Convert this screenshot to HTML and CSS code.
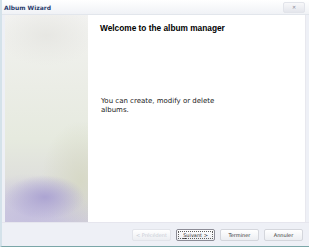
FILE: index.html
```html
<!DOCTYPE html>
<html lang="en">
<head>
  <meta charset="UTF-8" />
  <title>Album Wizard</title>
  <link rel="stylesheet" href="styles.css">
</head>
<body>
  <div class="fenetre">
    <div class="barre-titre">
      <span class="titre">Album Wizard</span>
      <span class="fermer">&#10005;</span>
    </div>

    <div class="corps">
      <div class="image-cote"></div>
      <div class="contenu">
        <h1>Welcome to the album manager</h1>
        <p>You can create, modify or delete albums.</p>
      </div>
    </div>

    <div class="boutons">
      <button type="button" disabled>&lt; Précédent</button>
      <button type="button" class="actif"><u>S</u>uivant &gt;</button>
      <button type="button">Terminer</button>
      <button type="button">Annuler</button>
    </div>
  </div>
</body>
</html>
```

FILE: styles.css
```css
html, body {
  margin: 0;
  padding: 0;
}

body {
  font-family: 'DejaVu Sans', Verdana, sans-serif;
  background: #ffffff;
  width: 309px;
  height: 249px;
  overflow: hidden;
  -webkit-font-smoothing: antialiased;
}

.fenetre {
  display: flex;
  flex-direction: column;
  width: 309px;
  height: 247px;
  background: #eef0f6;
  border-bottom: 1px solid #7aa6a8;
  border-left: 2px solid #d4e2ea;
  box-sizing: border-box;
}

.barre-titre {
  height: 14px;
  display: flex;
  align-items: center;
  justify-content: space-between;
  padding: 0 4px 0 2px;
  background: linear-gradient(#ffffff, #f0f2f6);
  border-bottom: 1px solid #e2e6ec;
}

.titre {
  font-size: 6px;
  font-weight: bold;
  color: #2a3c6c;
}

.fermer {
  width: 20px;
  height: 9px;
  font-size: 5px;
  line-height: 9px;
  text-align: center;
  color: #8a8a96;
  background: linear-gradient(#f8f8fa, #e4e6ec);
  border: 1px solid #e2e4ea;
  border-radius: 2px;
}

.corps {
  flex: 1;
  display: flex;
  padding-left: 3px;
  padding-right: 3px;
}

.image-cote {
  width: 83px;
  background:
    radial-gradient(ellipse 40px 22px at 48% 88%, rgba(172,164,210,1), rgba(172,164,210,0) 100%),
    radial-gradient(ellipse 60px 40px at 30% 96%, rgba(196,190,222,0.9), rgba(196,190,222,0) 100%),
    radial-gradient(ellipse 40px 60px at 92% 80%, rgba(214,216,196,0.9), rgba(214,216,196,0) 100%),
    radial-gradient(ellipse 50px 30px at 50% 10%, rgba(230,230,226,0.9), rgba(230,230,226,0) 100%),
    linear-gradient(#f2f2f0 0%, #ebede6 35%, #e6eadf 60%, #dfe0dc 78%, #cdcadf 100%);
}

.contenu {
  flex: 1;
  background: #ffffff;
  padding: 8px 12px;
  border-right: 1px solid #e8e8ee;
}

.contenu h1 {
  font-family: 'Liberation Sans', Arial, sans-serif;
  font-size: 8.3px;
  font-weight: bold;
  margin: 0;
  color: #000000;
}

.contenu p {
  font-size: 7px;
  line-height: 9px;
  margin: 64px 0 0 1px;
  width: 125px;
  color: #222222;
}

.boutons {
  height: 23px;
  display: flex;
  align-items: center;
  justify-content: flex-end;
  gap: 5px;
  padding-right: 6px;
  border-top: 1px solid #e6e6ee;
}

.boutons button {
  width: 39px;
  height: 12px;
  padding: 0;
  font-family: 'DejaVu Sans', Verdana, sans-serif;
  font-size: 5px;
  color: #303030;
  background: linear-gradient(#ffffff, #eceef2);
  border: 1px solid #d4d6dc;
  border-radius: 2px;
}

.boutons button:disabled {
  color: #c8ccd4;
  border-color: #e2e4ea;
}

.boutons .actif {
  outline: 1px dotted #606060;
  outline-offset: -3px;
  border-color: #8c8c96;
}
```
